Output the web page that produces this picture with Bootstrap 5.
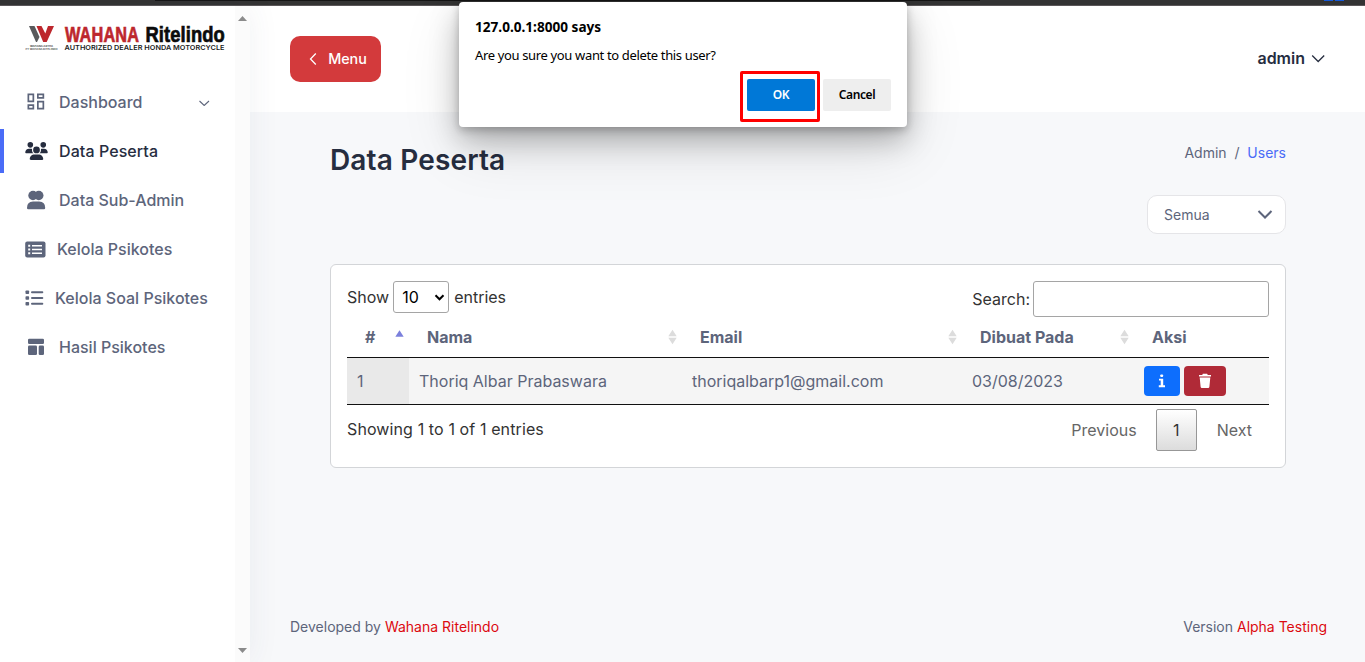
<!DOCTYPE html>
<html lang="id">
<head>
<meta charset="utf-8">
<meta name="viewport" content="width=device-width, initial-scale=1">
<title>Data Peserta</title>
<link href="https://cdn.jsdelivr.net/npm/bootstrap@5.3.0/dist/css/bootstrap.min.css" rel="stylesheet">
<style>
body{font-family:Inter,"Liberation Sans",sans-serif;font-size:16px;line-height:24px;color:#5d657b;background:#f7f8fa;height:662px;overflow:hidden}
svg{display:block;flex:none}
.chrome-edge{height:6px;background:#333;border-bottom:1px solid #5b5759;position:relative}
.chrome-edge .tabline{position:absolute;left:155px;width:825px;top:0;height:1px;background:#151515}
.chrome-edge .dot{position:absolute;left:1324px;top:0}
.app{height:656px}
.side{width:250px;background:#fff;box-shadow:0 0 30px rgba(60,75,100,.07);position:relative;z-index:1}
.side-track{width:15px;background:#fbfbfb;padding:10px 0 9px}
.brand{padding:14px 0 0 25px;height:72px}
.menu-list{padding-top:2px}
.side-link{height:44px;margin-bottom:5px;padding-left:25px;color:#5d657b;font-weight:500;text-decoration:none}
.side-link.active{color:#262d3f;box-shadow:inset 4px 0 #4a6cf7;border-radius:0 3px 3px 0;letter-spacing:.08px}
.side-link .ico{width:34px}
.topbar{height:106px;background:#fff;padding:0 41px 0 40px}
.btn-menu{background:#d33a3c;color:#fff;width:91px;height:46px;border-radius:10px;font-size:14.300px;font-weight:500}
.btn-menu svg{margin:0 11px 0 5px}
.who{color:#262d3f;font-weight:600;font-size:16px;margin-top:-2px}
.who svg{margin-left:6px}
.body-area{padding:30px 80px 0 80px;height:491px}
h1.title{font-size:28px;line-height:36px;font-weight:600;color:#262d3f;letter-spacing:.15px}
.crumb{font-size:14px;margin-top:-1px}
.crumb a.here{color:#4a6cf7;text-decoration:none}
.filter-row{margin-top:17px}
.filter{width:139px;height:39px;border:1px solid #e5e5e8;border-radius:10px;background:#fff;font-size:14px;padding:0 12px 0 16px}
.panel{height:204px;border:1px solid #d3d5d8;border-radius:6px;background:#fff;padding:16px;margin-top:30px}
.dt{color:#333}
.len{width:56px;height:32px;border:1px solid #a5a5a5;border-radius:3px;color:#000;padding:0 3px 0 8px;margin:0 5px 0 4px}
.find{width:236px;height:36px;border:1px solid #a5a5a5;border-radius:3px;margin-left:3px;padding:5px}
table.grid{table-layout:fixed;width:922px;border-collapse:separate;border-spacing:0;color:#5d657b}
.grid th{height:41px;padding:0 5px 0 18px;font-weight:700;border-bottom:1px solid #111;vertical-align:middle}
.grid td{height:47px;padding:0 10px;background:#f5f5f5;border-bottom:1px solid #111;vertical-align:middle}
.grid td:first-child{background:#e9e9e9}
.act{height:30px;border-radius:4px;padding:0}
.act-i{width:36px;background:#0d6efd}
.act-d{width:42px;background:#b02a37}
.info{padding-top:12px;letter-spacing:.11px}
.pg{color:#666;padding:4px 17px 0 0}
.pg-now{width:41px;height:42px;border:1px solid #979797;border-radius:2px;background:linear-gradient(#fff,#dcdcdc);color:#333;margin:0 20px 0 19px}
.foot{font-size:14px;padding:0 39px 0 40px;line-height:20px;margin-top:14px}
.foot span{color:#dc0a0f}
.dialog{position:absolute;left:459px;top:2px;width:448px;height:125px;background:#fff;border-radius:4px;box-shadow:0 13px 29px rgba(0,0,0,.25),0 3px 8px rgba(0,0,0,.22),0 20px 60px rgba(0,0,0,.12);z-index:10;padding:15px 16px;font-family:"Noto Sans","Open Sans",sans-serif;font-size:13px;line-height:20px;color:#000}
.dialog .host{font-weight:700;line-height:19px;font-size:13.600px}
.dialog .msg{margin-top:9px;letter-spacing:-.35px}
.dialog .acts{gap:8px;margin-top:14px}
.dbtn{width:68px;height:32px;border:0;border-radius:2px;font-size:12px;font-weight:600;background:#eee;letter-spacing:-.4px}
.dbtn.ok{background:#0078d7;color:#fff}
.ring{position:absolute;left:281px;top:69px;width:80px;height:51px;border:3px solid #f00;border-radius:2px}
</style>
</head>
<body>
<div class="chrome-edge"><div class="tabline"></div>
<svg class="dot" width="22" height="2"><path d="M0 0H9V1H0zM11 0H20V1H11z" fill="#1458d8"/></svg></div>
<div class="app d-flex">
  <aside class="side d-flex flex-shrink-0">
    <div class="flex-grow-1">
      <div class="brand">
        <svg width="202" height="36" viewBox="25 20 202 36">
          <path d="M29 26h5.500l5 11-2.500 5h-1z" fill="#58595b"/><path d="M36.500 26h5l3.800 7.500L48 26h6l-7.300 16h-3.500z" fill="#bd272d"/>
          <text x="30" y="47.300" font-size="2.600" font-weight="700" fill="#444" textLength="23" lengthAdjust="spacingAndGlyphs">WAHANA ARTHA</text>
          <text x="25.500" y="49.800" font-size="2" font-weight="700" fill="#555" textLength="32" lengthAdjust="spacingAndGlyphs">PT WAHANA RITELINDO</text>
          <g font-family="'Liberation Sans',sans-serif" font-weight="700" font-size="22" stroke-width=".7">
          <text transform="translate(65 42.200) scale(.74 1)" fill="#bd272d" stroke="#bd272d" textLength="100">WAHANA</text>
          <text transform="translate(145.500 42.200) scale(.835 1)" fill="#0b0b0b" stroke="#0b0b0b" textLength="95">Ritelindo</text></g>
          <text x="64.500" y="49.800" font-size="6.700" font-weight="600" fill="#1a1a1a" textLength="160" lengthAdjust="spacingAndGlyphs">AUTHORIZED DEALER HONDA MOTORCYCLE</text>
        </svg>
      </div>
      <nav class="menu-list">
        <a class="side-link d-flex align-items-center"><span class="ico"><svg width="22" height="18" viewBox="0 0 22 18" fill="none" stroke="currentColor" stroke-width="1.700"><path d="M3.350 1.350h5v7h-5zM12.850 1.350h5.500v3.500h-5.500zM12.850 8.650h5.500v7h-5.500zM3.350 12.150h5v3.500h-5z"/></svg></span>Dashboard
          <svg class="ms-auto me-4" width="13" height="8" viewBox="0 0 13 8" fill="none" stroke="currentColor" stroke-width="1.100"><path d="M1.500 3l4.700 4.500L11 3"/></svg></a>
        <a class="side-link active d-flex align-items-center"><span class="ico"><svg width="23" height="18" viewBox="0 0 640 512" fill="currentColor"><path d="M144 0a80 80 0 1 1 0 160A80 80 0 1 1 144 0zM512 0a80 80 0 1 1 0 160A80 80 0 1 1 512 0zM0 298.700C0 239.800 47.800 192 106.700 192h42.700c15.900 0 31 3.500 44.600 9.700-1.300 7.200-1.900 14.700-1.900 22.300 0 38.200 16.800 72.500 43.300 96H21.300C9.600 320 0 310.400 0 298.700zM405.300 320h-.7c26.600-23.500 43.300-57.800 43.300-96 0-7.600-.7-15-1.900-22.300 13.600-6.300 28.700-9.700 44.600-9.700h42.700C592.200 192 640 239.800 640 298.700c0 11.800-9.600 21.300-21.300 21.300zM224 224a96 96 0 1 1 192 0 96 96 0 1 1-192 0zM128 485.300C128 411.700 187.700 352 261.300 352h117.400C452.300 352 512 411.700 512 485.300c0 14.700-11.900 26.700-26.700 26.700H154.700c-14.700 0-26.700-11.900-26.700-26.700z"/></svg></span>Data Peserta</a>
        <a class="side-link d-flex align-items-center"><span class="ico"><svg width="22" height="20" viewBox="0 0 22 20" fill="currentColor"><circle cx="8" cy="5.500" r="4.700"/><circle cx="13.800" cy="5.500" r="4.700"/><path d="M2 18q0-6.500 6-6.500h6.200q6 0 6 6.500 0 1.300-1.200 1.300H3.200Q2 19.300 2 18z"/></svg></span>Data Sub-Admin</a>
        <a class="side-link d-flex align-items-center"><span class="ico" style="width:32px"><svg width="21" height="17" viewBox="0 0 21 17"><rect x=".2" y=".5" width="20.300" height="16" rx="2" fill="currentColor"/><path d="M3.200 3.800h2v2h-2zM3.200 7.500h2v2h-2zM3.200 11.200h2v2h-2zM7 4.100h10v1.400H7zM7 7.800h10v1.400H7zM7 11.500h10v1.400H7z" fill="#fff"/></svg></span>Kelola Psikotes</a>
        <a class="side-link d-flex align-items-center"><span class="ico" style="width:30px"><svg width="19" height="16" viewBox="0 0 19 16" fill="currentColor"><rect x=".5" y=".5" width="3.600" height="3.600" rx=".8"/><rect x=".5" y="6.200" width="3.600" height="3.600" rx=".8"/><rect x=".5" y="12" width="3.600" height="3.600" rx=".8"/><rect x="6" y="1.300" width="12.300" height="2" rx="1"/><rect x="6" y="7" width="12.300" height="2" rx="1"/><rect x="6" y="12.800" width="12.300" height="2" rx="1"/></svg></span>Kelola Soal Psikotes</a>
        <a class="side-link d-flex align-items-center"><span class="ico"><svg width="22" height="18" viewBox="0 0 22 18" fill="currentColor"><rect x="3" y=".8" width="16" height="5.300" rx="1.300"/><rect x="3" y="7.600" width="9" height="9.400" rx="1.300"/><rect x="13.700" y="7.600" width="5.300" height="9.400" rx="1.300"/></svg></span>Hasil Psikotes</a>
      </nav>
    </div>
    <div class="side-track d-flex flex-column justify-content-between align-items-center">
      <svg width="9" height="5"><path d="M4.500 0L9 5H0z" fill="#8b8b8b"/></svg>
      <svg width="9" height="5"><path d="M0 0h9L4.500 5z" fill="#8b8b8b"/></svg>
    </div>
  </aside>
  <main class="flex-grow-1">
    <header class="topbar d-flex align-items-center justify-content-between">
      <button class="btn btn-menu border-0 p-0 d-flex align-items-center justify-content-center"><svg width="8" height="14" viewBox="0 0 8 14" fill="none" stroke="#fff" stroke-width="1.300"><path d="M6.800 1.500L1.500 7l5.300 5.500"/></svg>Menu</button>
      <div class="who d-flex align-items-center">admin<svg width="14" height="9" viewBox="0 0 14 9" fill="none" stroke="#262d3f" stroke-width="1.300"><path d="M1.200 1.500l6 6 6-6"/></svg></div>
    </header>
    <section class="body-area">
      <div class="d-flex justify-content-between">
        <h1 class="title mb-0">Data Peserta</h1>
        <div class="crumb">Admin&nbsp; /&nbsp; <a class="here" href="#">Users</a></div>
      </div>
      <div class="filter-row d-flex justify-content-end">
        <div class="filter d-flex align-items-center justify-content-between">Semua<svg width="16" height="11" viewBox="0 0 16 11" fill="none" stroke="#5d657b" stroke-width="2"><path d="M1.500 2L8 8.500 14.500 2"/></svg></div>
      </div>
      <div class="panel">
        <div class="dt d-flex justify-content-between align-items-start">
          <div class="d-flex align-items-center">Show<div class="len d-flex align-items-center justify-content-between">10<svg width="11" height="7" viewBox="0 0 11 7" fill="none" stroke="#000" stroke-width="2"><path d="M1.500 1.300l4 4 4-4"/></svg></div>entries</div>
          <div class="d-flex align-items-center">Search:<input class="find" aria-label="Search"></div>
        </div>
        <table class="grid">
          <colgroup><col style="width:62px"><col style="width:273px"><col style="width:280px"><col style="width:172px"><col style="width:135px"></colgroup>
          <thead><tr>
            <th><div class="d-flex justify-content-between align-items-center">#<svg width="9" height="16"><path d="M4.500 1.300L8.700 7.800H.3z" fill="#7b80dc"/></svg></div></th>
            <th><div class="d-flex justify-content-between align-items-center">Nama<svg width="9" height="16"><path d="M4.500.7L8.700 7.200H.3zM.3 8.700h8.400L4.500 15.200z" fill="#dcdcdc"/></svg></div></th>
            <th><div class="d-flex justify-content-between align-items-center">Email<svg width="9" height="16"><path d="M4.500.7L8.700 7.200H.3zM.3 8.700h8.400L4.500 15.200z" fill="#dcdcdc"/></svg></div></th>
            <th><div class="d-flex justify-content-between align-items-center">Dibuat Pada<svg width="9" height="16"><path d="M4.500.7L8.700 7.200H.3zM.3 8.700h8.400L4.500 15.200z" fill="#dcdcdc"/></svg></div></th>
            <th>Aksi</th></tr></thead>
          <tbody><tr><td>1</td><td>Thoriq Albar Prabaswara</td><td>thoriqalbarp1@gmail.com</td><td>03/08/2023</td>
            <td><div class="d-flex gap-1">
              <button class="btn act act-i border-0 d-flex align-items-center justify-content-center"><svg width="8" height="14" viewBox="0 0 8 14" fill="#fff"><rect x="2.300" y=".5" width="2.800" height="2.500" rx=".8"/><path d="M1 4.800h4.200v6.500H7v1.900H.8v-1.900h1.900V6.600H1z"/></svg></button>
              <button class="btn act act-d border-0 d-flex align-items-center justify-content-center"><svg width="14" height="16" viewBox="0 0 14 16" fill="#fff"><path d="M1 1.900h3.200l.7-1.100h4.200l.7 1.100H13v1.700H1zM1.700 4.600h10.600l-.9 9.200q-.1 1.200-1.300 1.200H3.900q-1.200 0-1.300-1.200z"/></svg></button>
            </div></td></tr></tbody>
        </table>
        <div class="dt d-flex justify-content-between">
          <div class="info">Showing 1 to 1 of 1 entries</div>
          <div class="pg d-flex align-items-center">Previous<div class="pg-now d-flex align-items-center justify-content-center">1</div>Next</div>
        </div>
      </div>
    </section>
    <footer class="foot d-flex justify-content-between"><div>Developed by <span>Wahana Ritelindo</span></div><div>Version <span>Alpha Testing</span></div></footer>
  </main>
</div>
<div class="dialog">
  <div class="host">127.0.0.1:8000 says</div>
  <div class="msg">Are you sure you want to delete this user?</div>
  <div class="acts d-flex justify-content-end"><button class="dbtn ok">OK</button><button class="dbtn">Cancel</button></div>
  <div class="ring"></div>
</div>
<script src="https://cdn.jsdelivr.net/npm/bootstrap@5.3.0/dist/js/bootstrap.bundle.min.js"></script>
</body>
</html>
